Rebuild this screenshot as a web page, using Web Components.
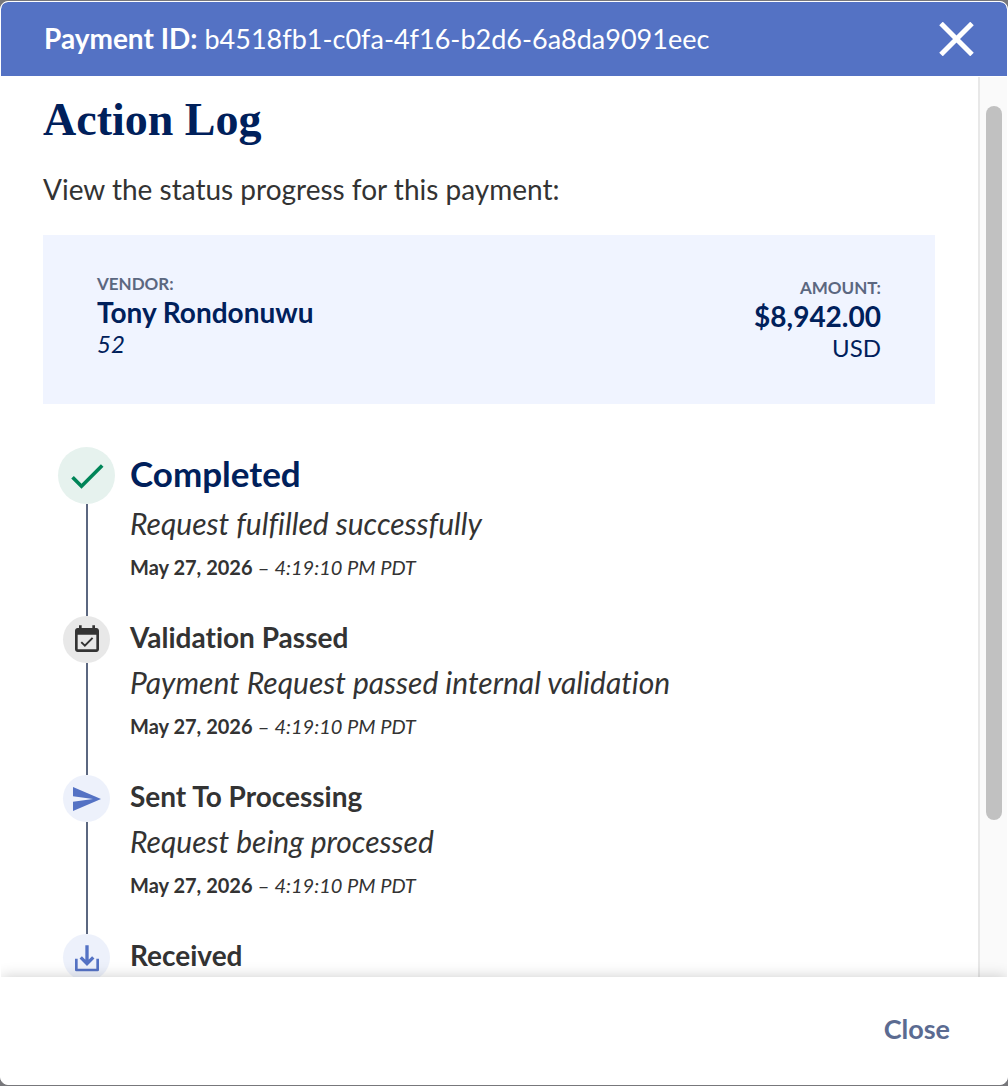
<!DOCTYPE html>
<html lang="en">
<head>
<meta charset="utf-8">
<meta name="viewport" content="width=device-width, initial-scale=1">
<title>Action Log</title>
<style>
body {
	background: #77777b;
	color: #333;
	font-family: Lato, "Open Sans", sans-serif;
	font-variant-ligatures: none;
	margin: 0;
}
</style>
</head>
<body>

<log-dialog>
	<b slot="label">Payment ID:</b>
	<span slot="title">b4518fb1-c0fa-4f16-b2d6-6a8da9091eec</span>
	<log-heading heading="Action Log">View the status progress for this payment:</log-heading>
	<payment-summary vendor="Tony Rondonuwu" vendor-id="52" amount="$8,942.00" currency="USD"></payment-summary>
	<log-timeline>
		<log-entry kind="completed" heading="Completed" date="May 27, 2026" time="4:19:10 PM PDT">Request fulfilled successfully</log-entry>
		<log-entry kind="validated" heading="Validation Passed" date="May 27, 2026" time="4:19:10 PM PDT">Payment Request passed internal validation</log-entry>
		<log-entry kind="sent" heading="Sent To Processing" date="May 27, 2026" time="4:19:10 PM PDT">Request being processed</log-entry>
		<log-entry kind="received" heading="Received"></log-entry>
	</log-timeline>
</log-dialog>

<script>
const icons = {
	completed: '<svg width="44" height="44" viewBox="0 0 24 24"><path fill="#008558" d="M9 16.17 4.83 12l-1.42 1.41L9 19 21 7l-1.41-1.41z"/></svg>',
	validated: '<svg width="32" height="32" viewBox="0 0 24 24"><path fill="#333" d="M19 3h-1V1h-2v2H8V1H6v2H5c-1.11 0-1.99.9-1.99 2L3 19c0 1.1.89 2 2 2h14c1.1 0 2-.9 2-2V5c0-1.1-.9-2-2-2zm0 16H5V8h14v11z"/><path fill="none" stroke="#333" stroke-width="1.5" d="m7.7 13.6 2.7 2.6 5.8-5.8"/></svg>',
	sent: '<svg width="32" height="32" viewBox="0 0 24 24"><path fill="#5472c4" d="M1.500 3v7l15 2-15 2v7l21-9z"/></svg>',
	received: '<svg width="32" height="32" viewBox="0 0 24 24"><path fill="none" stroke="#5472c4" stroke-width="2" stroke-linejoin="round" d="M4 12.500V21h16V12.500"/><path fill="none" stroke="#5472c4" stroke-width="2.500" d="M12 2.500V16M7.300 11.500l4.700 4.700 4.700-4.700"/></svg>'
};

const attach = (element, html) => {
	const template = document.createElement('template');
	template.innerHTML = html;
	element.attachShadow({ mode: 'open' }).appendChild(template.content.cloneNode(true));
};

class LogHeading extends HTMLElement {
	connectedCallback() {
		attach(this, `
<style>
:host {
	display: block;
}
h1 {
	color: #00205b;
	font: bold 46px/56px "Liberation Serif", serif;
	margin: 0 0 21px;
}
p {
	font-size: 28px;
	line-height: 40px;
	margin: 0;
}
</style>
<h1>${this.getAttribute('heading')}</h1>
<p><slot></slot></p>
`);
	}
}

class PaymentSummary extends HTMLElement {
	connectedCallback() {
		attach(this, `
<style>
:host {
	align-items: flex-start;
	background: #f0f4ff;
	color: #00205b;
	display: flex;
	justify-content: space-between;
	margin-top: 26px;
	padding: 38px 54px 41px;
}
div:last-child {
	padding-top: 4px;
	text-align: right;
}
small,
strong,
em,
span {
	display: block;
}
small {
	color: #5b6780;
	font-size: 17px;
	font-weight: bold;
	line-height: 22px;
}
strong {
	font-size: 28px;
	line-height: 34px;
}
em,
span {
	font-size: 24px;
	line-height: 30px;
}
</style>
<div>
	<small>VENDOR:</small>
	<strong>${this.getAttribute('vendor')}</strong>
	<em>${this.getAttribute('vendor-id')}</em>
</div>
<div>
	<small>AMOUNT:</small>
	<strong>${this.getAttribute('amount')}</strong>
	<span>${this.getAttribute('currency')}</span>
</div>
`);
	}
}

class LogTimeline extends HTMLElement {
	connectedCallback() {
		attach(this, `
<style>
:host {
	display: flex;
	flex-direction: column;
	padding: 43px 15px;
}
</style>
<slot></slot>
`);
	}
}

class LogEntry extends HTMLElement {
	connectedCallback() {
		const date = this.getAttribute('date');

		attach(this, `
<style>
:host {
	--dot: 47px;
	--tint: #edf1fb;
	display: grid;
	gap: 15px;
	grid-template-columns: 57px 1fr;
}
:host([kind="completed"]) {
	--dot: 57px;
	--tint: #e6f2ee;
}
:host([kind="validated"]) {
	--tint: #e8e8e8;
}
.rail {
	align-items: center;
	display: flex;
	flex-direction: column;
}
.dot {
	align-items: center;
	background: var(--tint);
	border-radius: 50%;
	display: flex;
	height: var(--dot);
	justify-content: center;
	width: var(--dot);
}
.line {
	background: #5b6780;
	flex: 1;
	width: 2px;
}
:host(:last-child) .line {
	display: none;
}
.text {
	padding-bottom: 28px;
}
h2 {
	font-size: 28px;
	line-height: calc(var(--dot) - 4px);
	margin: 0;
}
:host([kind="completed"]) h2 {
	color: #00205b;
	font-size: 35px;
}
p {
	font-size: 30px;
	font-style: italic;
	line-height: 46px;
	margin: 0;
}
.when {
	font-size: 20px;
	font-style: normal;
	line-height: 42px;
}
</style>
<div class="rail">
	<div class="dot">${icons[this.getAttribute('kind')]}</div>
	<div class="line"></div>
</div>
<div class="text">
	<h2>${this.getAttribute('heading')}</h2>
	<p><slot></slot></p>
	${date ? `<p class="when"><b>${date}</b> – <em>${this.getAttribute('time')}</em></p>` : ''}
</div>
`);
	}
}

class LogDialog extends HTMLElement {
	connectedCallback() {
		attach(this, `
<style>
:host {
	background: #fff;
	border: 1px solid #fff;
	border-radius: 8px;
	box-sizing: border-box;
	display: flex;
	flex-direction: column;
	height: calc(100vh - 2px);
	margin-top: 1px;
	overflow: hidden;
}
header {
	align-items: center;
	background: #5472c4;
	border-radius: 7px 7px 0 0;
	color: #fff;
	display: flex;
	justify-content: space-between;
	line-height: 34px;
	padding: 19px 30px 20px 43px;
}
.id {
	align-items: baseline;
	display: flex;
	font-size: 27px;
	gap: 7px;
}
slot[name="label"] {
	font-size: 28px;
}
button {
	background: none;
	border: 0;
	color: inherit;
	cursor: pointer;
	font: inherit;
	padding: 0;
}
header button {
	height: 34px;
}
header svg {
	display: block;
}
main {
	display: flex;
	flex: 1;
	min-height: 0;
}
.content {
	flex: 1;
	overflow: auto;
	padding: 16px 43px 0 42px;
	scrollbar-width: none;
}
.track {
	background: #fafafa;
	border-left: 2px solid #e8e8e8;
	box-sizing: border-box;
	margin-top: 1px;
	padding: 29px 5px 0 6px;
	width: 29px;
}
.thumb {
	background: #c1c1c1;
	border-radius: 8px;
	height: 82%;
}
footer {
	box-shadow: 0 0 14px rgba(0, 0, 0, 0.2);
	color: #5b6b91;
	display: flex;
	font-size: 27px;
	font-weight: bold;
	justify-content: flex-end;
	line-height: 34px;
	padding: 35px 57px 38px;
}
</style>
<header>
	<div class="id"><slot name="label"></slot><slot name="title"></slot></div>
	<button aria-label="Dismiss"><svg width="40" height="34" viewBox="0 0 40 34"><path d="M4 1.500 35 32.500M35 1.500 4 32.500" stroke="#fff" stroke-width="5"/></svg></button>
</header>
<main>
	<div class="content"><slot></slot></div>
	<div class="track"><div class="thumb"></div></div>
</main>
<footer><button>Close</button></footer>
`);
	}
}

window.customElements.define('log-heading', LogHeading);
window.customElements.define('payment-summary', PaymentSummary);
window.customElements.define('log-timeline', LogTimeline);
window.customElements.define('log-entry', LogEntry);
window.customElements.define('log-dialog', LogDialog);
</script>
</body>
</html>
